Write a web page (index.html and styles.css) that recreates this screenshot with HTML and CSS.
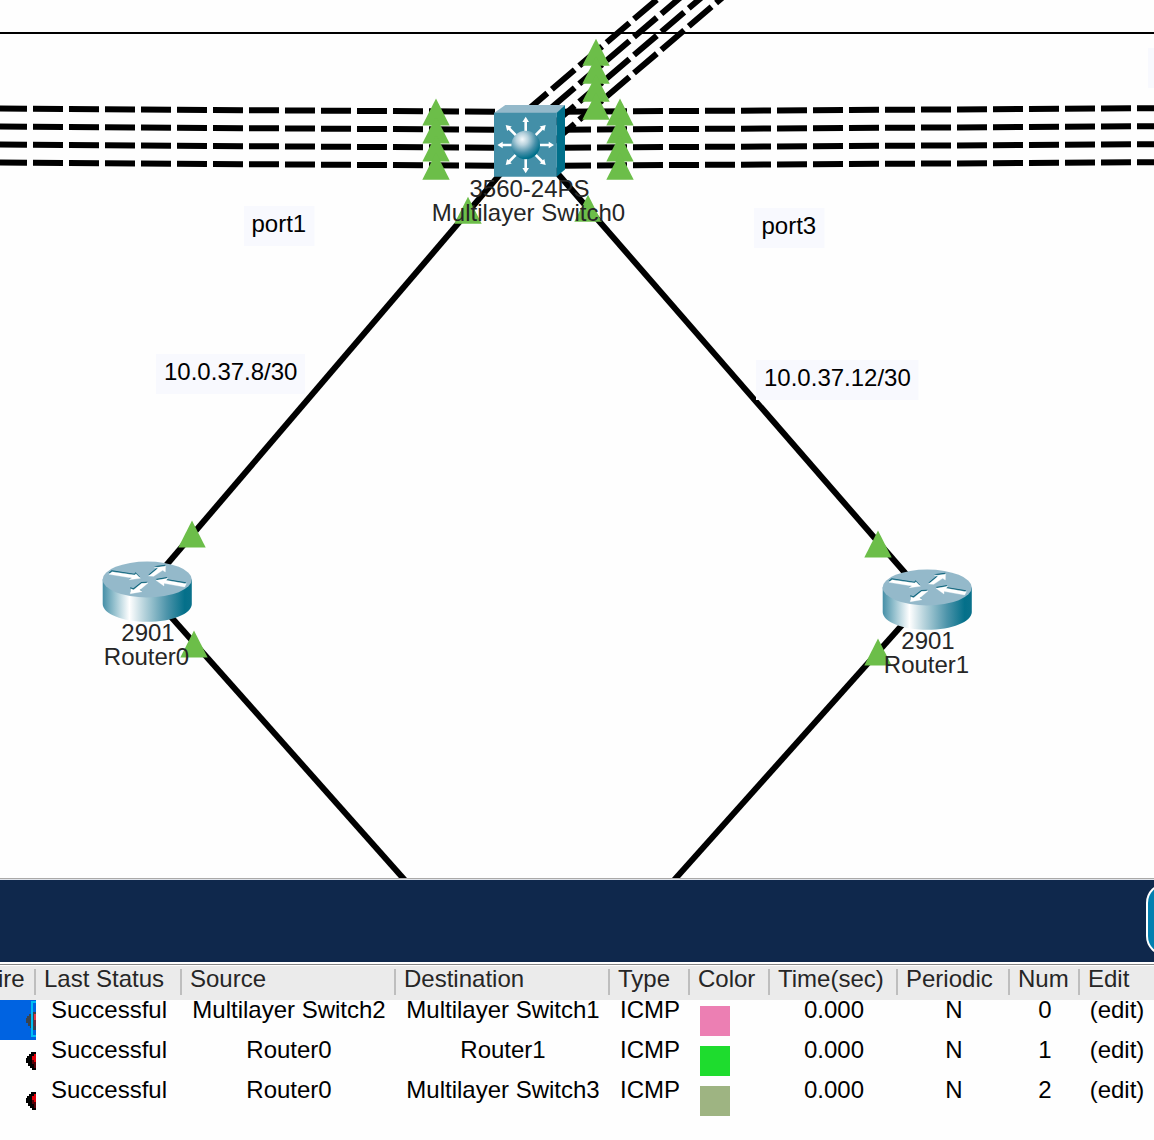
FILE: index.html
```html
<!DOCTYPE html>
<html lang="en">
<head>
<meta charset="utf-8">
<title>Network Topology</title>
<link rel="stylesheet" href="styles.css">
</head>
<body>
<main class="app">
<svg class="topology" width="1154" height="878" viewBox="0 0 1154 878">
  <defs>
    <path id="link-up" d="M0 0L13.7 27H-13.7Z"/>
    <linearGradient id="side" x1="0" x2="1" y1="0" y2="0">
      <stop offset="0" stop-color="#458fa7"/>
      <stop offset=".12" stop-color="#8fbdcb"/>
      <stop offset=".3" stop-color="#fff"/>
      <stop offset=".45" stop-color="#bdd7df"/>
      <stop offset=".72" stop-color="#4d94aa"/>
      <stop offset=".92" stop-color="#04708a"/>
      <stop offset="1" stop-color="#0a718b"/>
    </linearGradient>
    <radialGradient id="ball" cx=".38" cy=".3" r=".68">
      <stop offset="0" stop-color="#f4f9fb"/>
      <stop offset=".3" stop-color="#b9d3de"/>
      <stop offset=".7" stop-color="#468fa8"/>
      <stop offset="1" stop-color="#00708b"/>
    </radialGradient>
    <path id="ray" d="M-1.3 -13V-23H-3.3L0 -28.3L3.3 -23H1.3V-13Z"/>
    <g id="arrows">
      <path d="M66 185L134 195L138 191L151 205L118 209L126 204L57 193Z"/>
      <path d="M176 198L204 175L193 173L227 168L226 186L218 181L191 199Z"/>
      <path d="M198 211L233 205L229 211L289 221L284 231L222 220L222 228Z"/>
      <path d="M174 219L155 220L131 239L122 236L121 251L156 245L149 240Z"/>
    </g>
    <g id="router">
      <path d="M102.7 579.5V604C102.7 613.8 122.6 621.8 147.2 621.8S191.8 613.8 191.8 604V579.5Z" fill="url(#side)"/>
      <ellipse cx="147.2" cy="579.5" rx="44.6" ry="17.9" fill="#94b9ca"/>
      <g transform="translate(90 510) scale(.3333)">
        <use href="#arrows" x="-1" y="-4" fill="#086079"/>
        <use href="#arrows" fill="#fff" stroke="#fff" stroke-width="1"/>
      </g>
    </g>
  </defs>
  <path d="M0 33H1154" stroke="#000" stroke-width="2"/>
  <g class="trunk">
    <path d="M-3 108.5L526 112"/>
    <path d="M-3 126.5L526 130"/>
    <path d="M-3 144.5L526 148"/>
    <path d="M-3 162.5L526 166"/>
    <path d="M525 111.9L1160 108.2"/>
    <path d="M525 129.9L1160 126.2"/>
    <path d="M525 147.9L1160 144.2"/>
    <path d="M525 165.9L1160 162.2"/>
    <path d="M524.5 112.6L798.5 -121.4"/>
    <path d="M524.5 130.6L798.5 -103.4"/>
    <path d="M524.5 148.6L798.5 -85.4"/>
    <path d="M524.5 166.6L798.5 -67.4"/>
  </g>
  <g class="cable">
    <path d="M526 144L148.5 586"/>
    <path d="M532 144L928 599.3"/>
    <path d="M148 591L409 884.8"/>
    <path d="M928 596L670 884.7"/>
  </g>
  <g class="box">
    <rect x="756" y="360" width="162.5" height="40"/>
    <rect x="156" y="354" width="149" height="40"/>
    <rect x="244" y="206" width="70.5" height="40"/>
    <rect x="754" y="208" width="70.5" height="40"/>
    <rect x="1148" y="48" width="70" height="40"/>
  </g>
  <g fill="#6cbe49">
    <use href="#link-up" x="436" y="98.5"/><use href="#link-up" x="436" y="116.5"/><use href="#link-up" x="436" y="134.5"/><use href="#link-up" x="436" y="152.7"/>
    <use href="#link-up" x="620" y="98.5"/><use href="#link-up" x="620" y="116.5"/><use href="#link-up" x="620" y="134.5"/><use href="#link-up" x="620" y="152.7"/>
    <use href="#link-up" x="596" y="38.7"/><use href="#link-up" x="596" y="56.7"/><use href="#link-up" x="596" y="74.7"/><use href="#link-up" x="596" y="92.7"/>
    <use href="#link-up" x="468" y="196.7"/>
    <use href="#link-up" x="588" y="194.7"/>
    <use href="#link-up" x="192" y="520.5"/>
    <use href="#link-up" x="194" y="630.5"/>
    <use href="#link-up" x="878" y="530.5"/>
    <use href="#link-up" x="878" y="638.5"/>
  </g>
  <path d="M494 113L505.3 105H565L557 113Z" fill="#94b9ca"/>
  <path d="M556.5 113L565 105V169.5L556.5 176.7Z" fill="#006f8a"/>
  <path d="M494 112.7H556.7V176.7H494Z" fill="#438fa8"/>
  <g fill="#fff" transform="translate(525.7 145)">
    <use href="#ray"/><use href="#ray" transform="rotate(45)"/><use href="#ray" transform="rotate(90)"/><use href="#ray" transform="rotate(135)"/>
    <use href="#ray" transform="rotate(180)"/><use href="#ray" transform="rotate(225)"/><use href="#ray" transform="rotate(270)"/><use href="#ray" transform="rotate(315)"/>
  </g>
  <circle cx="525.7" cy="145" r="14.3" fill="url(#ball)"/>
  <use href="#router"/>
  <use href="#router" x="780" y="8"/>
  <g class="name">
    <text x="529.5" y="197">3560-24PS</text>
    <text x="528.5" y="221">Multilayer Switch0</text>
    <text x="148" y="641">2901</text>
    <text x="146.5" y="665">Router0</text>
    <text x="928" y="649">2901</text>
    <text x="926.5" y="673">Router1</text>
  </g>
  <g class="note">
    <text x="251.5" y="232">port1</text>
    <text x="761.5" y="234">port3</text>
    <text x="164" y="380">10.0.37.8/30</text>
    <text x="764" y="386">10.0.37.12/30</text>
  </g>
</svg>
<div class="toolbar"><div class="tool-button"></div></div>
<div class="pdu-list">
  <div class="row head">
    <span class="fire">ire</span><span>Last Status</span><span>Source</span><span>Destination</span><span>Type</span><span>Color</span><span>Time(sec)</span><span>Periodic</span><span>Num</span><span>Edit</span>
  </div>
  <div class="row">
    <span class="bomb selected"><svg width="36" height="40" viewBox="0 0 36 40"><path d="M36 12H31V14H29V16H27V18H26V23H28V26H30V28H32V30H36Z" fill="#39434f"/><path d="M36 14H34V20H36Z" fill="#e03a48"/><path d="M36 20H34V26H36Z" fill="#6c2d40"/><path d="M31 1H36V3H33V35H36V37H31Z" fill="#00bdf2"/></svg></span>
    <span>Successful</span><span>Multilayer Switch2</span><span>Multilayer Switch1</span><span>ICMP</span><span><i class="swatch pink"></i></span><span>0.000</span><span>N</span><span>0</span><span>(edit)</span>
  </div>
  <div class="row">
    <span class="bomb"><svg width="36" height="40" viewBox="0 0 36 40"><path d="M36 12H31V14H29V16H27V18H26V23H28V26H30V28H32V30H36Z"/><path d="M36 14H34V16H32V20H34V22H36Z" fill="#e00008"/><path d="M34 20H32V24H34V28H36V22H34Z" fill="#520006"/></svg></span>
    <span>Successful</span><span>Router0</span><span>Router1</span><span>ICMP</span><span><i class="swatch green"></i></span><span>0.000</span><span>N</span><span>1</span><span>(edit)</span>
  </div>
  <div class="row">
    <span class="bomb"><svg width="36" height="40" viewBox="0 0 36 40"><path d="M36 12H31V14H29V16H27V18H26V23H28V26H30V28H32V30H36Z"/><path d="M36 14H34V16H32V20H34V22H36Z" fill="#e00008"/><path d="M34 20H32V24H34V28H36V22H34Z" fill="#520006"/></svg></span>
    <span>Successful</span><span>Router0</span><span>Multilayer Switch3</span><span>ICMP</span><span><i class="swatch olive"></i></span><span>0.000</span><span>N</span><span>2</span><span>(edit)</span>
  </div>
</div>
</main>
</body>
</html>
```
FILE: styles.css
```css
* { box-sizing: border-box; }
body {
  margin: 0;
  background: #fefefe;
  color: #000;
  font: 24px/24px "Liberation Sans", Arial, sans-serif;
}
.app {
  display: flex;
  flex-direction: column;
  width: 1154px;
  height: 1140px;
  overflow: hidden;
}
.topology { display: block; flex: none; }
.trunk, .cable { stroke: #000; stroke-width: 6; fill: none; }
.trunk { stroke-dasharray: 30 6; }
.box { fill: #f8f9fe; }
.name { text-anchor: middle; fill: #262626; }
.toolbar {
  display: flex;
  flex: none;
  height: 84px;
  padding: 4px 0 0 1146px;
  border-top: 1px solid #aaa9a8;
  background: #0f284c;
  box-shadow: inset 0 1px #dfe3ea;
  overflow: hidden;
}
.tool-button {
  flex: none;
  width: 80px;
  height: 73px;
  border: 2px solid #fff;
  border-radius: 20px;
  background: #0380b0;
}
.pdu-list { padding-top: 2px; }
.row {
  display: grid;
  grid-template-columns: 36px 146px 214px 214px 80px 80px 128px 112px 70px 74px;
  height: 40px;
  text-align: center;
  white-space: nowrap;
}
.row > span { line-height: 20px; }
.head {
  height: 36px;
  border-top: 1px solid #868686;
  padding-top: 4px;
  background: #ebebeb;
  box-shadow: inset 0 1px #fff;
  color: #262626;
  text-align: left;
}
.head > span {
  height: 26px;
  padding-left: 8px;
  border-right: 2px solid #bebebe;
}
.head > span:last-child { border-right: 0; }
.head > .fire { padding-left: 0; margin-left: -2px; }
.bomb { display: block; height: 40px; }
.bomb svg { display: block; shape-rendering: crispEdges; }
.selected { background: #0063e1; }
.swatch { display: block; width: 30px; height: 30px; margin: 6px 0 0 10px; }
.pink { background: #ec7fb3; }
.green { background: #1edc2e; }
.olive { background: #9eb482; }
```
